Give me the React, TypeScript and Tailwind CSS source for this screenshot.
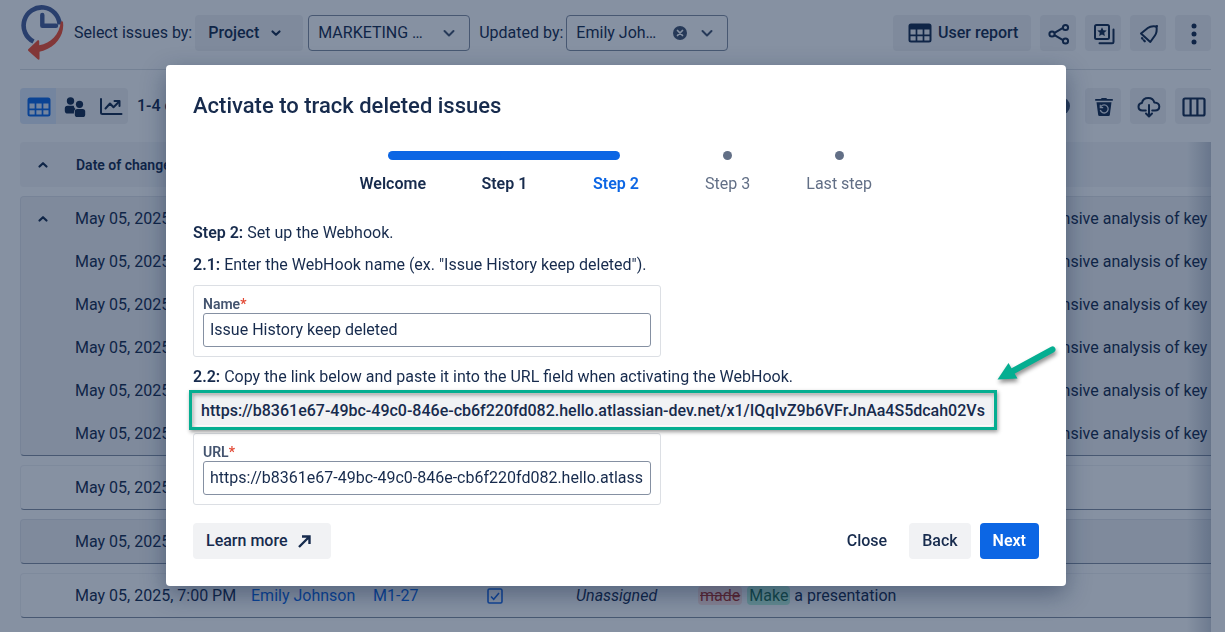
import React, { useState } from 'react';

const HOOK_URL =
  'https://b8361e67-49bc-49c0-846e-cb6f220fd082.hello.atlassian-dev.net/x1/IQqIvZ9b6VFrJnAa4S5dcah02Vs';

const steps = ['Welcome', 'Step 1', 'Step 2', 'Step 3', 'Last step'];
const currentStep = 2;

const Logo = () => (
  <svg width="44" height="56" viewBox="0 0 44 56" className="ml-px shrink-0" aria-hidden="true">
    <path d="M12.5 36.5A18 18 0 1 1 38.6 19.5" fill="none" stroke="#4a5f98" strokeWidth="4.6" />
    <path d="M21.3 10v10.8H35" fill="none" stroke="#4a5f98" strokeWidth="4.4" strokeLinecap="round" strokeLinejoin="round" />
    <path
      d="M39.8 16.500h2.200c1.500 11-4 21.500-15.200 27.300-3 1.500-6.300 2.600-8.300 2.900V53.500c0 1.300-.8 1.600-1.800.8L7.500 46c-.7-.7-.7-1.400 0-2L16.200 35.700c1-.9 2-.5 2 .8v3.800C30 38 38.500 29.500 39.800 16.500z"
      fill="#f8502f"
    />
  </svg>
);

const ChevronIcon = ({ up = false, className = '' }: { up?: boolean; className?: string }) => (
  <svg width="14" height="14" viewBox="0 0 14 14" className={className} aria-hidden="true">
    <path
      d={up ? 'M3.500 8.500L7 5.200l3.500 3.300' : 'M3.500 5.500L7 8.800l3.500-3.300'}
      fill="none"
      stroke="currentColor"
      strokeWidth="2.200"
      strokeLinecap="round"
      strokeLinejoin="round"
    />
  </svg>
);

const SelectArrow = () => (
  <svg width="14" height="14" viewBox="0 0 14 14" aria-hidden="true">
    <path d="M2.500 5L7 9.500 11.500 5" fill="none" stroke="#44546f" strokeWidth="2" strokeLinecap="round" strokeLinejoin="round" />
  </svg>
);

const GridIcon = () => (
  <svg width="24" height="20" viewBox="0 0 24 20" aria-hidden="true">
    <rect x="1.500" y="1.500" width="21" height="17" rx="1.500" fill="none" stroke="currentColor" strokeWidth="2" />
    <path d="M1 2h22v4.500H1z" fill="currentColor" />
    <path d="M2 12.300h20M8.500 6v12M15.500 6v12" stroke="currentColor" strokeWidth="1.700" />
  </svg>
);

const PeopleIcon = () => (
  <svg width="22" height="22" viewBox="0 0 22 22" fill="currentColor" aria-hidden="true">
    <circle cx="6.500" cy="5" r="3.700" />
    <path d="M3.500 9.800h6.300c.3 1.800 1 2.600 1.800 3.100-1.300 1-1.700 2.100-1.700 4.600H3.800C2 17.500.8 16.500.8 14.900v-2.400c0-1.700 1-2.700 2.700-2.700z" />
    <circle cx="15.500" cy="8.300" r="3.600" />
    <rect x="10.800" y="13" width="10.400" height="8" rx="2.600" />
  </svg>
);

const ChartIcon = () => (
  <svg width="24" height="20" viewBox="0 0 24 20" fill="none" stroke="currentColor" strokeWidth="2" strokeLinecap="round" strokeLinejoin="round" aria-hidden="true">
    <path d="M2 2v13.500c0 1 .6 1.500 1.500 1.500H22.500" />
    <path d="M6.500 11.500L11 6.500l3.500 3.800L20 4.700" />
    <path d="M15.500 4H20.500V9" />
  </svg>
);

const ShareIcon = () => (
  <svg width="22" height="22" viewBox="0 0 22 22" fill="none" stroke="currentColor" strokeWidth="2" aria-hidden="true">
    <path d="M6.500 9.800l8.500-5M6.500 12.200l8.500 5" />
    <circle cx="4" cy="11" r="2.600" />
    <circle cx="17.500" cy="4.500" r="2.600" />
    <circle cx="17.500" cy="18" r="2.600" />
  </svg>
);

const SavedIcon = () => (
  <svg width="22" height="22" viewBox="0 0 22 22" aria-hidden="true">
    <rect x="2" y="2" width="14" height="14" rx="1.500" fill="none" stroke="currentColor" strokeWidth="2" />
    <path d="M20.500 6.500v12.500c0 .8-.5 1.300-1.300 1.300H6.500" fill="none" stroke="currentColor" strokeWidth="2" strokeLinecap="round" />
    <path d="M9 4.200l1.400 3 3.300.4-2.500 2.200.7 3.300L9 11.400l-2.900 1.700.7-3.300-2.500-2.200 3.300-.4z" fill="currentColor" />
  </svg>
);

const BellIcon = () => (
  <svg width="22" height="22" viewBox="0 0 22 22" fill="none" stroke="currentColor" strokeWidth="2" strokeLinejoin="round" strokeLinecap="round" aria-hidden="true">
    <path d="M3 10.500L9.800 5c2.400-1.900 5.400-2.200 8.700-1.500.5 3.500.3 6.200-1.400 8.700L12.300 19z" />
    <path d="M18.300 3.700l.7-.7" />
    <path d="M4 15.200l.4.300M5.800 17.300l1 1" strokeWidth="2.200" />
  </svg>
);

const MoreIcon = () => (
  <svg width="20" height="22" viewBox="0 0 20 22" fill="currentColor" aria-hidden="true">
    <circle cx="10" cy="3" r="2.500" />
    <circle cx="10" cy="11" r="2.500" />
    <circle cx="10" cy="19" r="2.500" />
  </svg>
);

const TrashIcon = () => (
  <svg width="20" height="20" viewBox="0 0 20 20" aria-hidden="true">
    <path d="M1.200 3.800V1.900h5.600L7.800 1h4.400l1 .9h5.600v1.900z" fill="currentColor" />
    <path d="M2.500 5.200h15L15.800 18c-.1.700-.5 1-1.200 1H5.400c-.7 0-1.100-.3-1.200-1z" fill="currentColor" />
    <path d="M7 9.500a4 4 0 1 1-.7 3.500" fill="none" stroke="#dfe3ea" strokeWidth="1.300" />
    <path d="M6.300 7.800v2.900h2.900" fill="none" stroke="#dfe3ea" strokeWidth="1.200" />
  </svg>
);

const CloudIcon = () => (
  <svg width="24" height="22" viewBox="0 0 24 22" fill="none" stroke="currentColor" strokeWidth="2" strokeLinecap="round" strokeLinejoin="round" aria-hidden="true">
    <path d="M8.800 14.500H5.500c-2.500 0-4-1.600-4-3.700 0-2 1.400-3.500 3.400-3.700C5.500 3.800 8.200 2 11.300 2c3 0 5.300 1.700 6 4.400 3 .1 5 1.700 5 4.100 0 2.400-1.800 4-4.300 4h-2.800" />
    <path d="M12 9v11M9 17.500l3 3 3-3" />
  </svg>
);

const ColumnsIcon = () => (
  <svg width="24" height="20" viewBox="0 0 24 20" fill="none" stroke="currentColor" strokeWidth="2.200" aria-hidden="true">
    <rect x="1.500" y="1.500" width="21" height="17" rx="1.500" />
    <path d="M8.600 2v16M15.400 2v16" />
  </svg>
);

const TaskIcon = () => (
  <svg width="16" height="16" viewBox="0 0 16 16" fill="none" stroke="#1d6ae5" strokeWidth="1.600" role="img" aria-label="Task">
    <rect x="1" y="1" width="14" height="14" rx="1.500" />
    <path d="M4 8.500l2.700 2.700L12 5" />
  </svg>
);

const IconButton = ({ label, children }: { label: string; children: React.ReactNode }) => (
  <button aria-label={label} className="flex size-9 shrink-0 items-center justify-center rounded bg-[#091e42]/6 pt-px pl-px">
    {children}
  </button>
);

const Header = () => (
  <header className="flex h-[70px] items-center justify-between border-b border-[#091e42]/14 pb-[3px]">
    <div className="flex items-center">
      <Logo />
      <label htmlFor="project" className="ml-[9px] whitespace-nowrap">Select issues by:</label>
      <button className="ml-[3px] flex h-9 w-[108px] items-center rounded bg-[#091e42]/6 pl-[13px] font-medium">
        Project
        <ChevronIcon className="ml-[10px]" />
      </button>
      <div className="relative ml-[5px]">
        <select id="project" className="h-9 w-[162px] appearance-none rounded border border-[#8590a2] px-[9px]">
          <option>MARKETING …</option>
        </select>
        <span className="pointer-events-none absolute top-[11px] right-[14px]"><SelectArrow /></span>
      </div>
      <label htmlFor="updated" className="ml-[9px] whitespace-nowrap">Updated by:</label>
      <div className="relative ml-[3px]">
        <select id="updated" className="h-9 w-[162px] appearance-none rounded border border-[#8590a2] px-[9px]">
          <option>Emily Joh…</option>
        </select>
        <button aria-label="Clear" className="absolute top-[11px] right-[41px]">
          <svg width="14" height="14" viewBox="0 0 14 14" aria-hidden="true">
            <circle cx="7" cy="7" r="7" fill="#44546f" />
            <path d="M4.500 4.500l5 5M9.500 4.500l-5 5" stroke="#fff" strokeWidth="1.700" strokeLinecap="round" />
          </svg>
        </button>
        <span className="pointer-events-none absolute top-[11px] right-[14px]"><SelectArrow /></span>
      </div>
    </div>
    <div className="flex gap-[9px]">
      <button className="flex h-9 w-[138px] shrink-0 items-center gap-[6px] rounded bg-[#091e42]/6 pl-[15px] font-medium">
        <GridIcon />
        User report
      </button>
      <IconButton label="Share"><ShareIcon /></IconButton>
      <IconButton label="Saved filters"><SavedIcon /></IconButton>
      <IconButton label="Notifications"><BellIcon /></IconButton>
      <IconButton label="More"><MoreIcon /></IconButton>
    </div>
  </header>
);

const Toolbar = () => (
  <div className="mt-[18px] flex items-center justify-between">
    <div className="flex items-center">
      <div className="flex overflow-hidden rounded bg-[#091e42]/6">
        <button aria-label="Table" className="flex size-9 items-center justify-center bg-[#cfe1fd]/60 pt-px pl-px text-[#0c66e4]"><GridIcon /></button>
        <button aria-label="Users" className="flex size-9 items-center justify-center pt-px pl-px"><PeopleIcon /></button>
        <button aria-label="Chart" className="flex size-9 items-center justify-center pt-px pl-px"><ChartIcon /></button>
      </div>
      <p className="ml-[9px] font-medium">1-4 of 4</p>
    </div>
    <div className="flex items-center gap-[9px]">
      <button aria-label="Help" className="mr-[6px] size-[18px] rounded-full bg-[#44546f] text-xs text-white">?</button>
      <IconButton label="Deleted issues"><TrashIcon /></IconButton>
      <IconButton label="Export"><CloudIcon /></IconButton>
      <IconButton label="Columns"><ColumnsIcon /></IconButton>
    </div>
  </div>
);

const rowGrid = 'grid h-[43px] grid-cols-[54px_176px_122px_82px_121px_122px_1fr] items-center whitespace-nowrap';

const IssueRow = ({ first = false, children }: { first?: boolean; children: React.ReactNode }) => (
  <tr className={rowGrid}>
    <td className="pl-[15px]">{first && <button aria-label="Collapse" className="block"><ChevronIcon up /></button>}</td>
    <td>May 05, 2025, 7:00 PM</td>
    <td><a href="#user" className="text-[#0c66e4]">Emily Johnson</a></td>
    <td><a href="#issue" className="text-[#0c66e4]">M1-27</a></td>
    <td className="pl-8"><TaskIcon /></td>
    <td className="italic">Unassigned</td>
    <td>{children}</td>
  </tr>
);

const group = 'block rounded border border-[#091e42]/6 border-b-[#8590a2]';

const IssueTable = () => (
  <div className="relative mt-[18px] flex-1 overflow-hidden">
    <table className="flex w-[1300px] flex-col gap-[9px] text-left">
      <thead className="block rounded bg-[#091e42]/4">
        <tr className="grid h-[45px] grid-cols-[56px_177px_122px_82px_121px_122px_1fr] items-center text-sm">
          <th className="pl-4"><button aria-label="Collapse all" className="block"><ChevronIcon up /></button></th>
          <th className="font-semibold">Date of change</th>
          <th className="font-semibold">Updated by</th>
          <th className="font-semibold">Key</th>
          <th className="font-semibold">Issue type</th>
          <th className="font-semibold">Assignee</th>
          <th className="font-semibold">Change</th>
        </tr>
      </thead>
      <tbody className={`${group} bg-[#091e42]/6`}>
        {[0, 1, 2, 3, 4, 5].map((n) => (
          <IssueRow key={n} first={n === 0}>
            <span className="pl-[290px]">Comprehensive analysis of key objectives</span>
          </IssueRow>
        ))}
      </tbody>
      <tbody className={group}><IssueRow>To do</IssueRow></tbody>
      <tbody className={`${group} bg-[#091e42]/6`}><IssueRow>In progress</IssueRow></tbody>
      <tbody className={group}>
        <IssueRow>
          <del className="mr-[5px] rounded-sm bg-[#ffd5d2]/70 px-[2px] text-[#ae2e24]">made</del>
          <ins className="mr-1 rounded-sm bg-[#baf3db] px-[2px] text-[#216e4e] no-underline">Make</ins>
          a presentation
        </IssueRow>
      </tbody>
    </table>
    <div className="pointer-events-none absolute inset-y-0 right-0 w-6 bg-linear-to-r from-transparent to-[#091e42]/20" />
  </div>
);

const Stepper = () => (
  <ol className="mx-auto flex w-full max-w-[558px]">
    {steps.map((step, i) => (
      <li key={step} className="flex flex-1 flex-col items-center">
        <div className="relative flex h-[9px] w-full items-center justify-center">
          {i < currentStep && <span className="absolute left-1/2 h-[9px] w-full bg-[#0c66e4]" />}
          <span className={`relative size-[9px] rounded-full ${i <= currentStep ? 'bg-[#0c66e4]' : 'bg-[#626f86]'}`} />
        </div>
        <span
          className={`mt-[13px] leading-[22px] ${
            i < currentStep ? 'font-semibold' : i === currentStep ? 'font-semibold text-[#0c66e4]' : 'text-[#626f86]'
          }`}
        >
          {step}
        </span>
      </li>
    ))}
  </ol>
);

interface FieldProps {
  id: string;
  label: string;
  value: string;
  onChange: (value: string) => void;
}

const Field = ({ id, label, value, onChange }: FieldProps) => (
  <div className="max-w-[468px] rounded-[3px] border border-[#dcdfe4] p-[9px]">
    <label htmlFor={id} className="block text-sm leading-[18px] font-semibold text-[#44546f]">
      {label}
      <span className="text-[#e34935]">*</span>
    </label>
    <input
      id={id}
      value={value}
      onChange={(e) => onChange(e.target.value)}
      className="block h-[34px] w-full rounded-[3px] border border-[#8590a2] px-[6px] pb-[2px]"
    />
  </div>
);

// Green frame and arrow that point at the webhook link
const Highlight = () => (
  <>
    <div className="pointer-events-none absolute -inset-x-1 -top-1 -bottom-[5px] border-[3px] border-[#05ae91] shadow-[1px_2px_4px_rgba(0,0,0,0.4),inset_1px_2px_4px_rgba(0,0,0,0.35)]" />
    <svg width="70" height="50" viewBox="0 0 70 50" className="pointer-events-none absolute -top-[52px] -right-[70px] drop-shadow-[1px_3px_2px_rgba(0,0,0,0.45)]" aria-hidden="true">
      <path d="M59.500 7.500L20 29" stroke="#05ae91" strokeWidth="6" strokeLinecap="round" />
      <path d="M4.500 37.500L15.500 21l9 15.500z" fill="#05ae91" />
    </svg>
  </>
);

export default function App() {
  const [name, setName] = useState('Issue History keep deleted');
  const [url, setUrl] = useState(HOOK_URL);

  return (
    <div className="font-[Roboto,sans-serif] text-base text-[#172b4d]">
      <div className="flex h-screen flex-col overflow-hidden bg-white pr-[14px] pl-5">
        <Header />
        <Toolbar />
        <IssueTable />
      </div>

      <div className="fixed inset-0 flex items-start justify-center overflow-hidden bg-[#091e42]/49 pt-[65px] pl-[7px]">
        <div
          role="dialog"
          aria-modal="true"
          aria-labelledby="dialog-title"
          className="w-full max-w-[900px] rounded bg-white px-[27px] pt-7 pb-[27px] shadow-[0_8px_24px_rgba(9,30,66,0.4)]"
        >
          <h1 id="dialog-title" className="text-[22px] leading-[26px] font-medium">Activate to track deleted issues</h1>
          <div className="mt-8">
            <Stepper />
          </div>
          <p className="mt-[27px] leading-[22px]"><b className="font-semibold">Step 2:</b> Set up the Webhook.</p>
          <p className="mt-[10px] mb-[9px] leading-[22px]">
            <b className="font-semibold">2.1:</b> Enter the WebHook name (ex. "Issue History keep deleted").
          </p>
          <Field id="hook-name" label="Name" value={name} onChange={setName} />
          <p className="mt-[9px] leading-[22px]">
            <b className="font-semibold">2.2:</b> Copy the link below and paste it into the URL field when activating the WebHook.
          </p>
          <div className="relative mt-[6px] mb-2 max-w-[800px] rounded bg-[#f1f2f4] pt-[6px] pb-1 text-center leading-[21px] font-medium">
            {HOOK_URL}
            <Highlight />
          </div>
          <Field id="hook-url" label="URL" value={url} onChange={setUrl} />
          <div className="mt-[18px] flex items-center gap-[9px] font-medium">
            <a href="#docs" className="mr-auto flex h-9 w-[138px] items-center gap-[11px] rounded bg-[#f1f2f4] pl-[13px]">
              Learn more
              <svg width="13" height="13" viewBox="0 0 13 13" fill="none" stroke="currentColor" strokeWidth="2.400" aria-hidden="true">
                <path d="M1 12L11 2M4 1.500h7.500V9" />
              </svg>
            </a>
            <button className="h-9 rounded px-[13px]">Close</button>
            <button className="h-9 rounded bg-[#f1f2f4] px-[13px]">Back</button>
            <button className="h-9 rounded bg-[#0c66e4] px-[13px] font-semibold text-white">Next</button>
          </div>
        </div>
      </div>
    </div>
  );
}
